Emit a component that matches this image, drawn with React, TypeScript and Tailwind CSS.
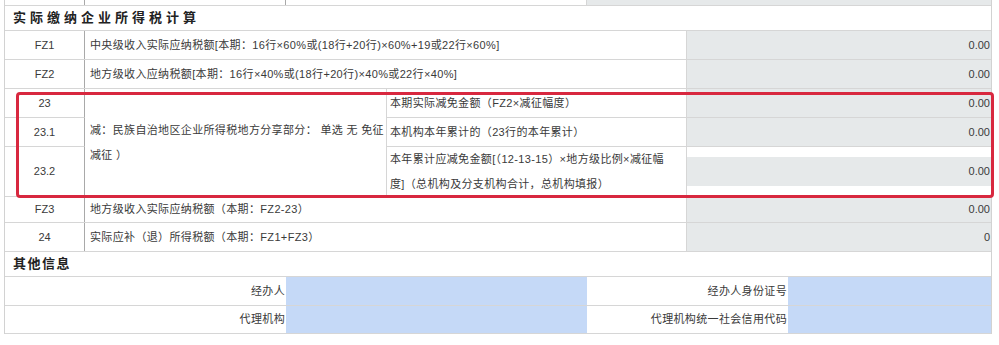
import React from "react";

const F = { fontFamily: '"Liberation Sans", "Noto Sans CJK SC", sans-serif' };

function NumCell({ h, children }: { h: string; children: React.ReactNode }) {
  return (
    <div className={`w-[80px] ${h} shrink-0 border-r border-b border-[#a9a9a9] border-b-[#d6d6d6] flex items-center justify-center`}>
      {children}
    </div>
  );
}

function Value({ children }: { children: React.ReactNode }) {
  return (
    <div className="w-[304px] shrink-0 h-full bg-[#e6e9ea] flex items-center justify-end pr-[1px]">
      {children}
    </div>
  );
}

export default function App() {
  return (
    <div className="w-[999px] h-[345px] bg-white relative text-[11px] text-[#3a3a3a] overflow-hidden" style={F}>
      <div className="ml-[4px] w-[988px] border-x border-[#d2d2d2]">
        {/* partial top row */}
        <div className="flex h-[6px] border-b border-[#d6d6d6]">
          <div className="w-[80px] border-r border-[#a9a9a9]" />
          <div className="w-[201px] border-r border-[#a9a9a9]" />
          <div className="w-[301px] border-r border-[#d6d6d6]" />
          <div className="w-[404px] bg-[#e6e9ea]" />
        </div>
        {/* header */}
        <div className="h-[25px] border-b border-[#d6d6d6] flex items-center pl-[8px] font-bold text-[13px] tracking-[4px] text-[#222]">
          实际缴纳企业所得税计算
        </div>
        {/* FZ1 */}
        <div className="flex h-[29px] border-b border-[#d6d6d6]">
          <div className="w-[80px] shrink-0 border-r border-[#a9a9a9] flex items-center justify-center">FZ1</div>
          <div className="w-[602px] shrink-0 border-r border-[#d6d6d6] flex items-center pl-[5px] whitespace-nowrap tracking-[0.35px]">
            中央级收入实际应纳税额[本期：16行×60%或(18行+20行)×60%+19或22行×60%]
          </div>
          <Value>0.00</Value>
        </div>
        {/* FZ2 */}
        <div className="flex h-[29px] border-b border-[#d6d6d6]">
          <div className="w-[80px] shrink-0 border-r border-[#a9a9a9] flex items-center justify-center">FZ2</div>
          <div className="w-[602px] shrink-0 border-r border-[#d6d6d6] flex items-center pl-[5px] whitespace-nowrap tracking-[0.35px]">
            地方级收入应纳税额[本期：16行×40%或(18行+20行)×40%或22行×40%]
          </div>
          <Value>0.00</Value>
        </div>
        {/* group 23 */}
        <div className="flex h-[108px]">
          <div className="w-[80px] shrink-0 flex flex-col">
            <NumCell h="h-[29px]">23</NumCell>
            <NumCell h="h-[29px]">23.1</NumCell>
            <NumCell h="h-[50px]">23.2</NumCell>
          </div>
          <div className="w-[302px] shrink-0 border-r border-b border-[#d6d6d6] flex items-center pl-[5px] leading-[25px] whitespace-nowrap tracking-[0.35px]">
            <div>
              减：民族自治地区企业所得税地方分享部分： 单选 无 免征
              <br />
              减征 ）
            </div>
          </div>
          <div className="w-[604px] shrink-0 flex flex-col">
            <div className="flex h-[29px] border-b border-[#d6d6d6]">
              <div className="w-[300px] shrink-0 border-r border-[#d6d6d6] flex items-center pl-[3px] whitespace-nowrap tracking-[0.35px]">
                本期实际减免金额（FZ2×减征幅度）
              </div>
              <Value>0.00</Value>
            </div>
            <div className="flex h-[29px] border-b border-[#d6d6d6]">
              <div className="w-[300px] shrink-0 border-r border-[#d6d6d6] flex items-center pl-[3px] whitespace-nowrap tracking-[0.35px]">
                本机构本年累计的（23行的本年累计）
              </div>
              <Value>0.00</Value>
            </div>
            <div className="flex h-[50px] border-b border-[#d6d6d6]">
              <div className="w-[300px] shrink-0 border-r border-[#d6d6d6] flex items-center pl-[3px] leading-[25px] whitespace-nowrap tracking-[0.35px]">
                <div>
                  本年累计应减免金额[（12-13-15）×地方级比例×减征幅
                  <br />
                  度]（总机构及分支机构合计，总机构填报）
                </div>
              </div>
              <div className="w-[304px] shrink-0 flex items-center">
                <div className="w-full h-[29px] bg-[#e6e9ea] flex items-center justify-end pr-[1px]">0.00</div>
              </div>
            </div>
          </div>
        </div>
        {/* FZ3 */}
        <div className="flex h-[26px] border-b border-[#d6d6d6]">
          <div className="w-[80px] shrink-0 border-r border-[#a9a9a9] flex items-center justify-center">FZ3</div>
          <div className="w-[602px] shrink-0 border-r border-[#d6d6d6] flex items-center pl-[5px] whitespace-nowrap tracking-[0.35px]">
            地方级收入实际应纳税额（本期：FZ2-23）
          </div>
          <Value>0.00</Value>
        </div>
        {/* 24 */}
        <div className="flex h-[29px] border-b border-[#d6d6d6]">
          <div className="w-[80px] shrink-0 border-r border-[#a9a9a9] flex items-center justify-center">24</div>
          <div className="w-[602px] shrink-0 border-r border-[#d6d6d6] flex items-center pl-[5px] whitespace-nowrap tracking-[0.35px]">
            实际应补（退）所得税额（本期：FZ1+FZ3）
          </div>
          <Value>0</Value>
        </div>
        {/* other info header */}
        <div className="h-[25px] border-b border-[#d6d6d6] flex items-center pl-[8px] font-bold text-[13px] tracking-[1.5px] text-[#222]">
          其他信息
        </div>
        <div className="flex h-[29px] border-b border-[#d6d6d6]">
          <div className="w-[281px] shrink-0 flex items-center justify-end pr-[1px] tracking-[0.35px]">经办人</div>
          <div className="w-[301px] shrink-0 bg-[#c5d9f7]" />
          <div className="w-[201px] shrink-0 flex items-center justify-end pr-[1px] tracking-[0.35px]">经办人身份证号</div>
          <div className="w-[203px] shrink-0 bg-[#c5d9f7]" />
        </div>
        <div className="flex h-[28px] border-b border-[#d6d6d6]">
          <div className="w-[281px] shrink-0 flex items-center justify-end pr-[1px] tracking-[0.35px]">代理机构</div>
          <div className="w-[301px] shrink-0 bg-[#c5d9f7]" />
          <div className="w-[201px] shrink-0 flex items-center justify-end pr-[1px] tracking-[0.35px]">代理机构统一社会信用代码</div>
          <div className="w-[203px] shrink-0 bg-[#c5d9f7]" />
        </div>
      </div>
      {/* red annotation box */}
      <div className="absolute left-[16px] top-[92px] w-[978px] h-[106px] border-[3px] border-[#d8283f] rounded-[4px] pointer-events-none" />
    </div>
  );
}
